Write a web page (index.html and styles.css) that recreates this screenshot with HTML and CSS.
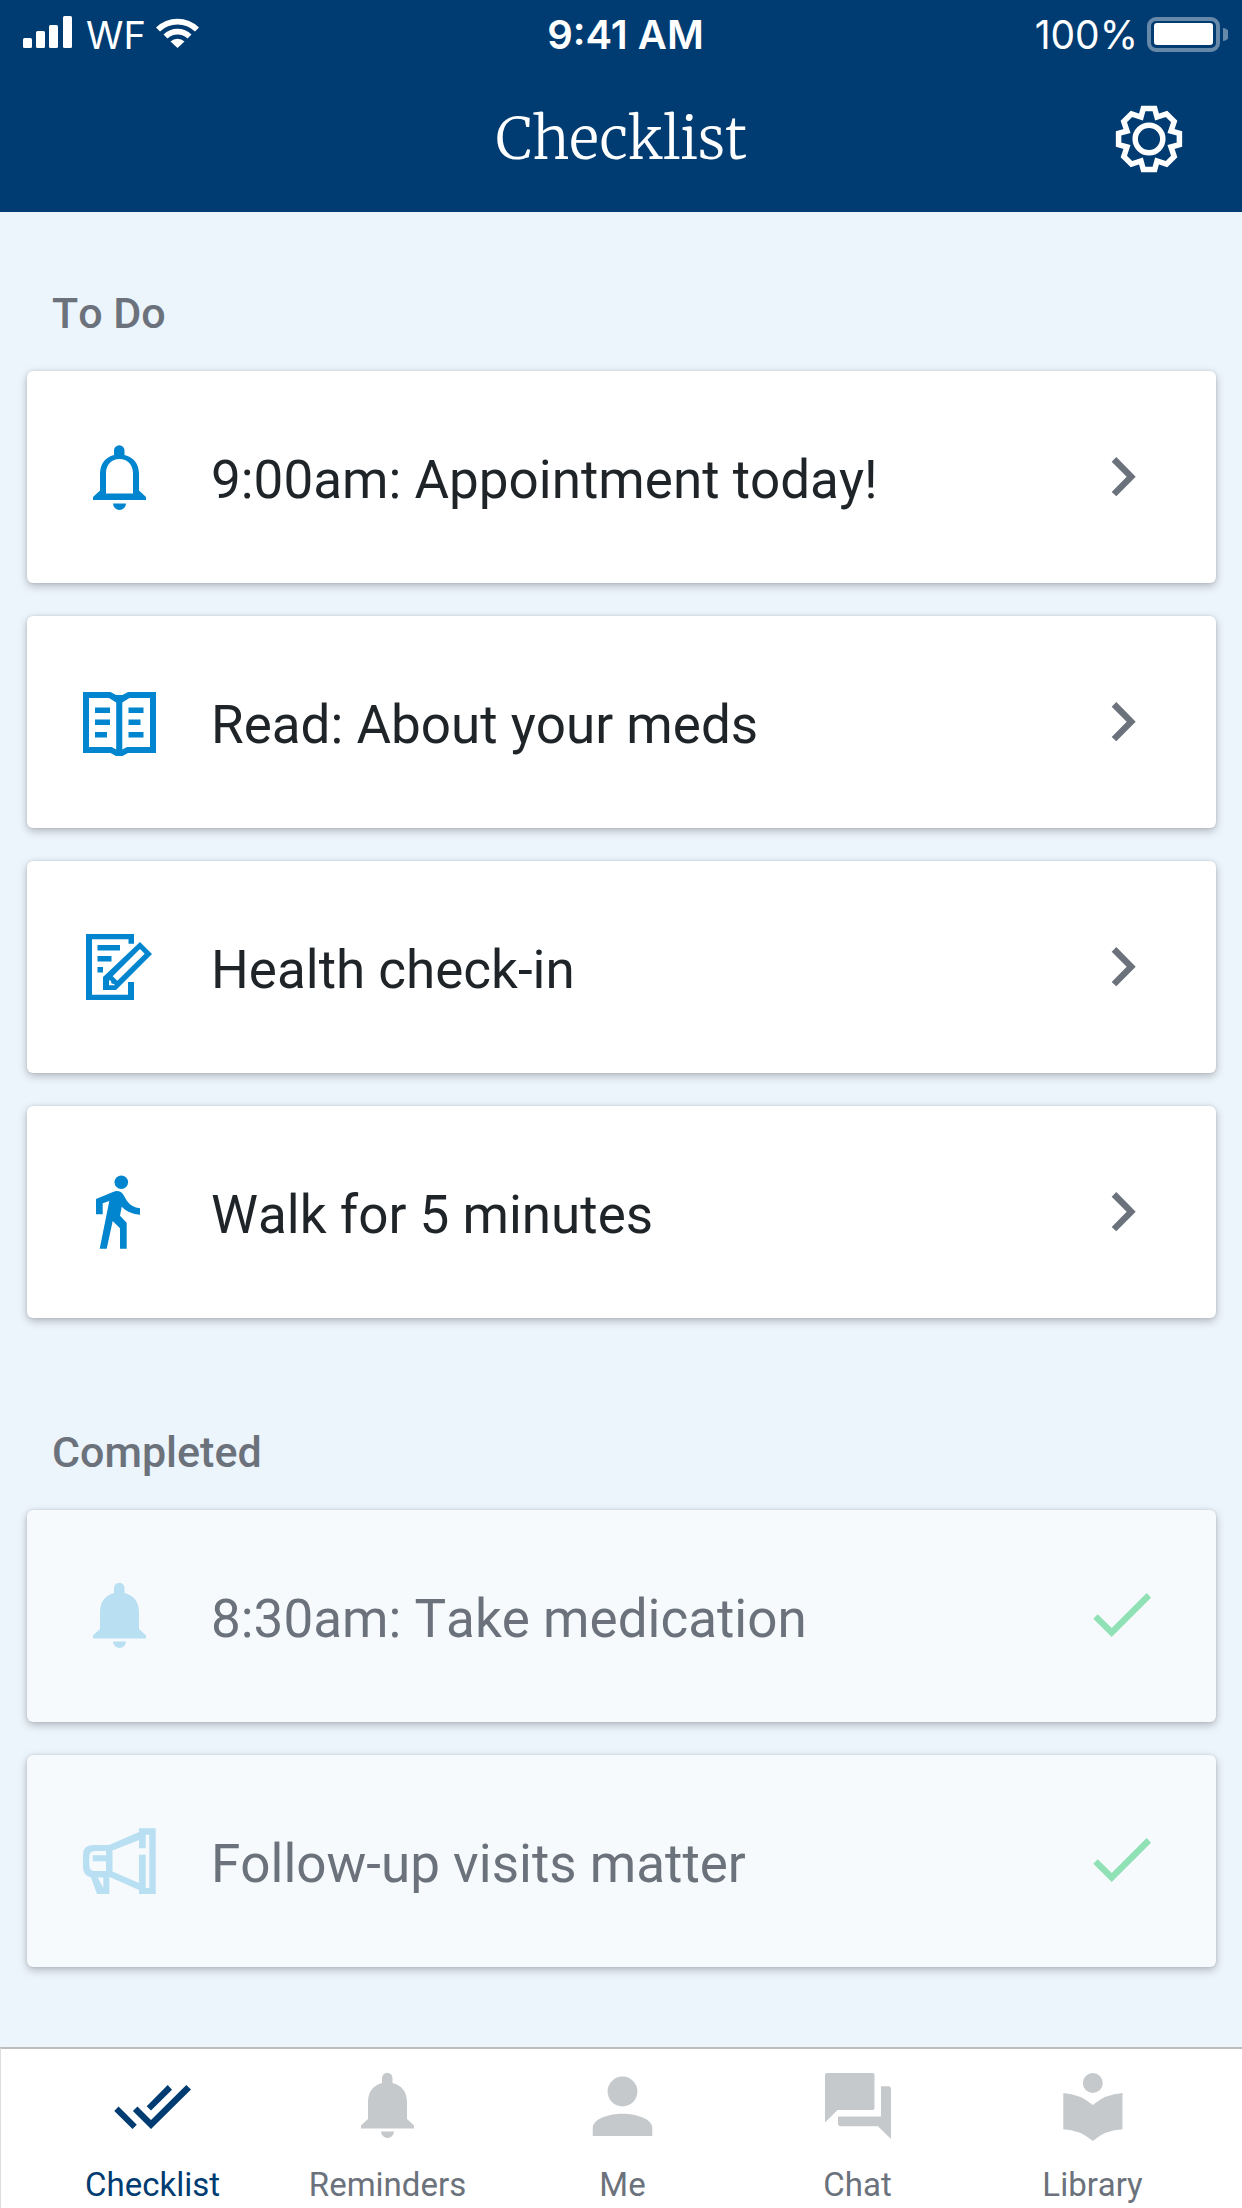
FILE: index.html
```html
<!DOCTYPE html>
<html lang="en">
<head>
<meta charset="utf-8">
<meta name="viewport" content="width=device-width, initial-scale=1">
<title>Checklist</title>
<link rel="stylesheet" href="styles.css">
</head>
<body>
<svg class="sprite" aria-hidden="true">
  <symbol id="bell" viewBox="0 0 80 80">
    <path d="M34 17V12a5.2 5.2 0 0 1 10.500 0V17C53.500 19 59 26 59 36V53L66 59.500V62.500H13V59.500L20 53V36C20 26 25.500 19 34 17Z"/>
    <path d="M33 65.500H46a6.500 6.500 0 0 1-13 0Z"/>
  </symbol>
  <symbol id="chevron" viewBox="0 0 80 80">
    <path d="M33.300 20 52.700 39.700 33.300 59.300 28.700 55 43.700 39.700 28.700 24.700Z"/>
  </symbol>
  <symbol id="check" viewBox="0 0 80 80">
    <path d="M14.700 38.300 28.700 52 63.700 17 68 21.700 28.700 61 10.300 42.700Z"/>
  </symbol>
</svg>
<div class="app">
  <header class="header">
    <div class="status">
      <div class="status-group">
        <svg class="signal" viewBox="0 0 49 40" aria-hidden="true">
          <rect x="0" y="23" width="9" height="10" rx="1.500"/><rect x="13" y="16" width="9" height="17" rx="1.500"/><rect x="26" y="10" width="9" height="23" rx="1.500"/><rect x="40" y="1" width="9" height="32" rx="1.500"/>
        </svg>
        <span class="carrier">WF</span>
        <svg class="wifi" viewBox="0 0 44 40" aria-hidden="true">
          <path d="M0 12.500a31 31 0 0 1 43 0l-4 4a25.500 25.500 0 0 0-35 0Z"/>
          <path d="M7.500 19.500a20 20 0 0 1 28 0l-4 4a14.500 14.500 0 0 0-20 0Z"/>
          <path d="M14.500 26.500a10 10 0 0 1 14 0l-7 6.500Z"/>
        </svg>
      </div>
      <span class="time">9:41 AM</span>
      <div class="status-group status-end">
        <span>100%</span>
        <svg class="battery" viewBox="0 0 82 40" aria-hidden="true">
          <rect class="battery-case" x="3" y="4" width="69" height="31" rx="7"/><rect x="8" y="8" width="59" height="22" rx="3"/><path class="battery-cap" d="M77 13a6.500 6.500 0 0 1 0 13Z"/>
        </svg>
      </div>
    </div>
    <div class="titlebar">
      <h1 class="title">Checklist</h1>
      <button class="settings" type="button" aria-label="Settings">
        <svg class="icon gear" viewBox="-40 -40 80 80" aria-hidden="true">
          <path d="M-5.700-30.400H5.700L8-22 17.500-25.200 25.200-17.500 22-8 30.400-5.700V5.700L22 8 25.200 17.500 17.500 25.200 8 22 5.700 30.400H-5.700L-8 22-17.500 25.200-25.200 17.500-22 8-30.400 5.700V-5.700L-22-8-25.200-17.500-17.500-25.200-8-22Z"/>
          <circle r="13.800"/>
        </svg>
      </button>
    </div>
  </header>

  <main class="main">
    <section class="section">
      <h2 class="section-title">To Do</h2>
      <ul class="list">
        <li><a class="card" href="#appointment">
          <svg class="icon" viewBox="0 0 80 80" aria-hidden="true">
            <path fill-rule="evenodd" d="M34 18V13.500a5.200 5.200 0 0 1 10.500 0V18C53.500 20 59 27 59 37V53.500L66 60V63H13V60L20 53.500V37C20 27 25.500 20 34 18ZM39.500 22C31.500 22 26 28 26 36V56.500H53V36C53 28 47.500 22 39.500 22Z"/>
            <path d="M33 66.500H46a6.500 6.500 0 0 1-13 0Z"/>
          </svg>
          <span class="card-text">9:00am: Appointment today!</span>
          <svg class="icon icon-next" aria-hidden="true"><use href="#chevron"/></svg>
        </a></li>
        <li><a class="card" href="#meds">
          <svg class="icon" viewBox="0 0 80 80" aria-hidden="true">
            <path fill-rule="evenodd" d="M3 10H30.500L36 13H42.500L48 10H76V71H48L42.500 74H36L30.500 71H3ZM9 16V65H31.500L36.200 67.500V20.500L29 16ZM42.300 20.500V67.500L47 65H70V16H49.500Z"/>
            <path d="M15 25.500H30V31H15ZM15 37.500H30V43H15ZM15 50H27V55.500H15ZM48.500 25.500H63.500V31H48.500ZM48.500 37.500H60.500V43H48.500ZM48.500 50H63.500V55.500H48.500Z"/>
          </svg>
          <span class="card-text">Read: About your meds</span>
          <svg class="icon icon-next" aria-hidden="true"><use href="#chevron"/></svg>
        </a></li>
        <li><a class="card" href="#check-in">
          <svg class="icon" viewBox="0 0 80 80" aria-hidden="true">
            <path d="M6 7H54V16.700H48.500V12.300H12V67.700H48V55H54V73H6Z"/>
            <path d="M17.500 18H40V23.500H17.500ZM17.500 29H31.500V34.500H17.500ZM17.500 40H23V45.500H17.500Z"/>
            <path fill-rule="evenodd" d="M60 15 72 27 36 63H23V50ZM60 22 32.700 49.300 37.300 53.700 64.700 26.700ZM29 53V58.300H35L34 57 31.500 56.500 31 54Z"/>
          </svg>
          <span class="card-text">Health check-in</span>
          <svg class="icon icon-next" aria-hidden="true"><use href="#chevron"/></svg>
        </a></li>
        <li><a class="card" href="#walk">
          <svg class="icon" viewBox="0 0 80 80" aria-hidden="true">
            <circle cx="41.300" cy="10.300" r="6.800"/>
            <path d="M16 27 33 20C37.500 18 41.500 19.500 43.500 23L46.700 28.500Q51.500 35.500 60 36.300V42.700Q48.500 42 41.700 34.700L40 43.700 46.700 50.700V76.700H40V56.300L32.700 49 26.700 76.700H19.700L29.300 29 22.700 31.300V42.300H16Z"/>
          </svg>
          <span class="card-text">Walk for 5 minutes</span>
          <svg class="icon icon-next" aria-hidden="true"><use href="#chevron"/></svg>
        </a></li>
      </ul>
    </section>

    <section class="section">
      <h2 class="section-title">Completed</h2>
      <ul class="list">
        <li><a class="card card-done" href="#medication">
          <svg class="icon" aria-hidden="true"><use href="#bell"/></svg>
          <span class="card-text">8:30am: Take medication</span>
          <svg class="icon icon-check" aria-hidden="true"><use href="#check"/></svg>
        </a></li>
        <li><a class="card card-done" href="#follow-up">
          <svg class="icon" viewBox="0 0 80 80" aria-hidden="true">
            <path fill-rule="evenodd" d="M59 7.300H75.700V73H59V69L32 57 29.300 56V73H17L11 56.500Q3 54.500 3 46V34Q3 24 13 24H29L59 11ZM65.700 13.700V27.300H59V19L32.500 29.500V50.500L59 62V33.700H65.700V67H69.300V13.700ZM26 30H15Q9.300 30 9.300 36V44Q9.300 50 15 50H26V40.300H12.700V34.300H26ZM17.700 56.500 23.300 67V56.500Z"/>
          </svg>
          <span class="card-text">Follow-up visits matter</span>
          <svg class="icon icon-check" aria-hidden="true"><use href="#check"/></svg>
        </a></li>
      </ul>
    </section>
  </main>

  <nav class="tabs" aria-label="Main">
    <a class="tab tab-active" href="#checklist" aria-current="page">
      <svg class="icon" viewBox="0 0 80 80" aria-hidden="true"><path d="M5.500 40.500 23.800 58.700 19.500 63 1.300 45ZM24.500 40.500 38 54 73.300 19 78 23.500 38 63 19.900 45ZM54.700 19 59 23.700 38 44.500 33.700 40.300Z"/></svg>
      <span>Checklist</span>
    </a>
    <a class="tab" href="#reminders">
      <svg class="icon" aria-hidden="true"><use href="#bell"/></svg>
      <span>Reminders</span>
    </a>
    <a class="tab" href="#me">
      <svg class="icon" viewBox="0 0 80 80" aria-hidden="true"><circle cx="39.500" cy="25.500" r="14.900"/><path d="M9.700 70V62C9.700 53 25.200 47.700 39.500 47.700S69.300 53 69.300 62V70Z"/></svg>
      <span>Me</span>
    </a>
    <a class="tab" href="#chat">
      <svg class="icon" viewBox="0 0 80 80" aria-hidden="true"><path d="M9 7H54.500Q56.500 7 56.500 9V42Q56.500 44 54.500 44H19.500L7 56.500V9Q7 7 9 7ZM63 20.300H70.500Q73 20.300 73 23V73L60 60.300H23Q20 60.300 20 57.500V50.500H63Z"/></svg>
      <span>Chat</span>
    </a>
    <a class="tab" href="#library">
      <svg class="icon" viewBox="0 0 80 80" aria-hidden="true"><circle cx="39.800" cy="17" r="10"/><path d="M10.300 27Q27 28 39.800 39 52.500 28 69.500 27V63.300Q52.500 64 39.800 75 27 64 10.300 63.300Z"/></svg>
      <span>Library</span>
    </a>
  </nav>
</div>
</body>
</html>
```
FILE: styles.css
```css
:root {
  --navy: #003c71;
  --page: #ecf4fc;
  --blue: #0085ce;
  --ink: #1f2429;
  --gray: #6b727b;
}

* { box-sizing: border-box; }

body {
  margin: 0;
  background: var(--page);
  color: var(--ink);
  font-family: Roboto, "Liberation Sans", sans-serif;
  font-kerning: none;
}

.sprite { position: absolute; width: 0; height: 0; }

.app {
  display: flex;
  flex-direction: column;
  min-height: 100vh;
}

.header { background: var(--navy); color: #fff; }

.status {
  display: grid;
  grid-template-columns: 1fr auto 1fr;
  align-items: center;
  height: 66px;
  padding: 4px 14px 0 23px;
  font: 400 39px/46px Inter, "Liberation Sans", sans-serif;
}

.status svg { height: 40px; fill: #fff; }
.status-group { display: flex; align-items: center; gap: 8px; }
.status-end { justify-content: flex-end; }
.carrier { margin: 0 2px 0 6px; font-size: 38px; }
.signal { width: 49px; }
.wifi { width: 44px; }
.time { font-size: 40px; font-weight: 600; }
.status .battery { width: 82px; }
.status .battery-case { fill: none; stroke: #6689aa; stroke-width: 4; }
.status .battery-cap { fill: #6689aa; }

.titlebar {
  display: grid;
  grid-template-columns: 80px 1fr 80px;
  align-items: center;
  height: 146px;
  padding: 0 53px;
}

.title {
  grid-column: 2;
  margin: 0;
  text-align: center;
  font: 300 57px/80px Merriweather, "Liberation Serif", serif;
}

.settings {
  height: 80px;
  padding: 0;
  border: 0;
  background: none;
  color: inherit;
  cursor: pointer;
}

.icon {
  display: block;
  flex: none;
  width: 80px;
  height: 80px;
  fill: currentColor;
}

.icon.gear { fill: none; stroke: currentColor; stroke-width: 5.5; }

.main { flex: 1; padding: 76px 26px 80px 27px; }
.section + .section { margin-top: 109px; }

.section-title {
  margin: 0 0 33px;
  padding-left: 25px;
  color: var(--gray);
  font-size: 43px;
  font-weight: 500;
  line-height: 50px;
}

.list {
  display: grid;
  gap: 33px;
  margin: 0;
  padding: 0;
  list-style: none;
}

.card {
  display: flex;
  align-items: center;
  height: 212px;
  padding: 0 53px;
  border-radius: 6px;
  background: #fff;
  box-shadow: 0 3px 8px rgba(0, 0, 0, .25), 0 0 3px rgba(0, 0, 0, .1);
  color: var(--blue);
  text-decoration: none;
}

.card-text {
  flex: 1;
  padding: 6px 0 0 51px;
  color: var(--ink);
  font-size: 53px;
  line-height: 64px;
}

.icon-next { color: var(--gray); }
.card-done { background: #f6fafd; color: #b8dff2; }
.card-done .card-text { color: var(--gray); }
.icon-check { color: #90e1b5; }

.tabs {
  display: grid;
  grid-template-columns: repeat(5, 1fr);
  padding: 17px 32px 3px 34px;
  border-top: 2px solid #bbbdbf;
  border-left: 1px solid #dcdddf;
  background: #fff;
}

.tab {
  display: grid;
  justify-items: center;
  gap: 19px;
  color: var(--gray);
  font-size: 33px;
  line-height: 40px;
  text-decoration: none;
}

.tab .icon { color: #c6c9cc; }
.tab-active, .tab-active .icon { color: var(--navy); }
```
